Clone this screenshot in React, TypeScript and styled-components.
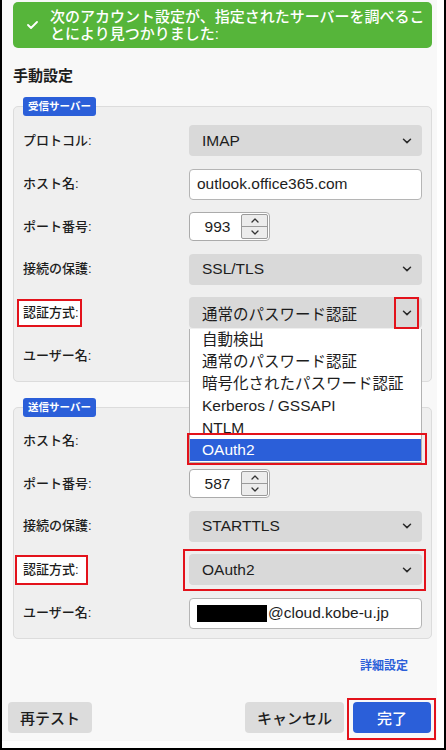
import React from "react";
import styled, { createGlobalStyle, css } from "styled-components";

const GlobalStyle = createGlobalStyle`
  html, body { margin: 0; padding: 0; background: #fff; }
  body {
    font-family: "Liberation Sans", "Noto Sans CJK JP", sans-serif;
    color: #1d1d1d;
  }
  * { box-sizing: border-box; }
`;

const RED = "#e3121b";
const BLUE = "#2b5fd9";

type Mark = { t: number; r: number; b: number; l: number; fill?: boolean };

const markBox = (m?: Mark) =>
  m &&
  css`
    position: relative;
    isolation: isolate;
    &::after {
      content: "";
      position: absolute;
      top: ${-m.t}px;
      right: ${-m.r}px;
      bottom: ${-m.b}px;
      left: ${-m.l}px;
      border: 2px solid ${RED};
      pointer-events: none;
      ${m.fill ? css`background: #fff; z-index: -1;` : css`z-index: 2;`}
    }
  `;

const Frame = styled.div`
  width: 446px;
  height: 750px;
  border: 2px solid #000;
  border-top: none;
  background: #fff;
  overflow: hidden;
  padding: 0 7px 7px 0;
`;

const Dialog = styled.div`
  height: 100%;
  background: #f8f8f8;
  display: flex;
  flex-direction: column;
`;

const Body = styled.div`
  padding: 2px 5px 0 11px;
  display: flex;
  flex-direction: column;
`;

const Banner = styled.div`
  height: 46px;
  background: #56b53a;
  border-radius: 5px;
  display: flex;
  align-items: center;
  padding: 0 6px 0 14px;
  gap: 12px;
  color: #fff;
`;

const BannerText = styled.div`
  font-size: 15px;
  line-height: 17px;
  font-weight: 500;
  white-space: nowrap;
`;

const Heading = styled.h2`
  margin: 18px 0 0;
  font-size: 15px;
  line-height: 20px;
  font-weight: 700;
`;

const Group = styled.fieldset<{ $gap: number }>`
  margin: ${(p) => p.$gap}px 0 0;
  padding: 9px;
  border: 1px solid #dcdcdc;
  border-radius: 5px;
  background: #efefef;
  min-width: 0;
`;

const Badge = styled.legend`
  background: ${BLUE};
  color: #fff;
  font-size: 10.5px;
  font-weight: 700;
  height: 19px;
  line-height: 19px;
  padding: 0 5px;
  border-radius: 3px;
`;

const Rows = styled.div`
  display: grid;
  grid-template-columns: 166px 1fr;
  row-gap: 12.5px;
  align-items: center;
`;

const Label = styled.span<{ $mark?: Mark }>`
  justify-self: start;
  font-size: 13px;
  line-height: 18px;
  font-weight: 500;
  ${(p) => markBox(p.$mark)}
`;

const SelectBox = styled.div<{ $mark?: Mark }>`
  position: relative;
  height: 31px;
  background: #d9d9d9;
  border-radius: 4px;
  display: flex;
  align-items: center;
  padding-left: 13px;
  font-size: 15.5px;
  ${(p) => markBox(p.$mark)}
`;

const Chevron = styled.span<{ $mark?: Mark }>`
  margin-left: auto;
  margin-right: 3px;
  width: 25px;
  height: 31px;
  display: flex;
  align-items: center;
  justify-content: center;
  ${(p) => markBox(p.$mark)}
`;

const TextInput = styled.div`
  height: 31px;
  background: #fff;
  border: 1px solid #b5b5b5;
  border-radius: 4px;
  display: flex;
  align-items: center;
  padding-left: 7px;
  font-size: 15.5px;
  white-space: nowrap;
  overflow: hidden;
`;

const Redacted = styled.span`
  display: inline-block;
  width: 70px;
  height: 17px;
  background: #000;
  margin-right: 1px;
`;

const Spinner = styled.div`
  justify-self: start;
  width: 81px;
  height: 29px;
  background: #fff;
  border: 1px solid #ababab;
  border-radius: 4px;
  display: flex;
  align-items: stretch;
`;

const SpinValue = styled.span`
  flex: 1;
  display: flex;
  align-items: center;
  justify-content: center;
  padding-left: 4px;
  font-size: 15.5px;
`;

const SpinButtons = styled.div`
  width: 27px;
  margin: 1px 1px 1px 0;
  display: flex;
  flex-direction: column;
  border: 1px solid #9a9a9a;
  border-radius: 2px;
  background: #ececec;
`;

const SpinButton = styled.span<{ $down?: boolean }>`
  flex: 1;
  display: flex;
  align-items: center;
  justify-content: center;
  ${(p) => p.$down && css`border-top: 1px solid #9a9a9a;`}
`;

const Dropdown = styled.div`
  position: absolute;
  top: calc(100% + 1px);
  left: 0;
  right: 0;
  z-index: 10;
  background: #fff;
  border: 1px solid #b3b3b3;
  border-top: none;
  padding-bottom: 1px;
`;

const Option = styled.div<{ $active?: boolean; $mark?: Mark }>`
  height: 22px;
  line-height: 22px;
  padding-left: 12px;
  font-size: 15.5px;
  white-space: nowrap;
  ${(p) =>
    p.$active &&
    css`
      background: ${BLUE};
      color: #fff;
    `}
  ${(p) => markBox(p.$mark)}
`;

const Link = styled.a`
  align-self: flex-end;
  margin: 19px 24px 0 0;
  color: ${BLUE};
  font-size: 12px;
  font-weight: 700;
  line-height: 16px;
  text-decoration: none;
`;

const Footer = styled.div`
  margin-top: 28px;
  padding: 0 6px;
  display: flex;
  justify-content: space-between;
`;

const ButtonGroup = styled.div`
  display: flex;
  gap: 9px;
`;

const Button = styled.button<{ $primary?: boolean; $mark?: Mark }>`
  height: 31px;
  padding: 0 12px;
  border: none;
  border-radius: 4px;
  font-family: inherit;
  font-size: 15px;
  font-weight: 500;
  background: #dcdcdc;
  color: #1d1d1d;
  ${(p) =>
    p.$primary &&
    css`
      background: ${BLUE};
      color: #fff;
      min-width: 78px;
    `}
  ${(p) => markBox(p.$mark)}
`;

const ChevronIcon = () => (
  <svg width="10" height="6" viewBox="0 0 10 6" fill="none">
    <path d="M1.5 1.2 L5 4.6 L8.5 1.2" stroke="#2a2a2a" strokeWidth="1.5" strokeLinecap="round" strokeLinejoin="round" />
  </svg>
);

const SmallArrow = ({ down }: { down?: boolean }) => (
  <svg width="8" height="5" viewBox="0 0 8 5" fill="none">
    <path
      d={down ? "M1 1 L4 4 L7 1" : "M1 4 L4 1 L7 4"}
      stroke="#333"
      strokeWidth="1.3"
      strokeLinecap="round"
      strokeLinejoin="round"
    />
  </svg>
);

const CheckIcon = () => (
  <svg width="11" height="8" viewBox="0 0 11 8" fill="none">
    <path d="M1 4 L4 7 L10 1" stroke="#fff" strokeWidth="1.8" strokeLinecap="round" strokeLinejoin="round" />
  </svg>
);

const Select = ({
  value,
  mark,
  chevronMark,
  children,
}: {
  value: string;
  mark?: Mark;
  chevronMark?: Mark;
  children?: React.ReactNode;
}) => (
  <SelectBox $mark={mark}>
    {value}
    <Chevron $mark={chevronMark}>
      <ChevronIcon />
    </Chevron>
    {children}
  </SelectBox>
);

const Port = ({ value }: { value: string }) => (
  <Spinner>
    <SpinValue>{value}</SpinValue>
    <SpinButtons>
      <SpinButton>
        <SmallArrow />
      </SpinButton>
      <SpinButton $down>
        <SmallArrow down />
      </SpinButton>
    </SpinButtons>
  </Spinner>
);

const authOptions = [
  "自動検出",
  "通常のパスワード認証",
  "暗号化されたパスワード認証",
  "Kerberos / GSSAPI",
  "NTLM",
  "OAuth2",
];

export default function App() {
  return (
    <>
      <GlobalStyle />
      <Frame>
        <Dialog>
          <Body>
            <Banner>
              <CheckIcon />
              <BannerText>
                次のアカウント設定が、指定されたサーバーを調べるこ
                <br />
                とにより見つかりました:
              </BannerText>
            </Banner>
            <Heading>手動設定</Heading>

            <Group $gap={11}>
              <Badge>受信サーバー</Badge>
              <Rows>
                <Label>プロトコル:</Label>
                <Select value="IMAP" />
                <Label>ホスト名:</Label>
                <TextInput>outlook.office365.com</TextInput>
                <Label>ポート番号:</Label>
                <Port value="993" />
                <Label>接続の保護:</Label>
                <Select value="SSL/TLS" />
                <Label $mark={{ t: 5, r: 3, b: 5, l: 6, fill: true }}>認証方式:</Label>
                <Select value="通常のパスワード認証" chevronMark={{ t: 0, r: 0, b: 1, l: 0 }}>
                  <Dropdown>
                    {authOptions.map((o) => (
                      <Option
                        key={o}
                        $active={o === "OAuth2"}
                        $mark={o === "OAuth2" ? { t: 6, r: 6, b: 4, l: 3 } : undefined}
                      >
                        {o}
                      </Option>
                    ))}
                  </Dropdown>
                </Select>
                <Label>ユーザー名:</Label>
                <TextInput />
              </Rows>
            </Group>

            <Group $gap={16}>
              <Badge>送信サーバー</Badge>
              <Rows>
                <Label>ホスト名:</Label>
                <TextInput />
                <Label>ポート番号:</Label>
                <Port value="587" />
                <Label>接続の保護:</Label>
                <Select value="STARTTLS" />
                <Label $mark={{ t: 6, r: 9, b: 6, l: 8, fill: true }}>認証方式:</Label>
                <Select value="OAuth2" mark={{ t: 5, r: 4, b: 6, l: 6 }} />
                <Label>ユーザー名:</Label>
                <TextInput>
                  <Redacted />
                  @cloud.kobe-u.jp
                </TextInput>
              </Rows>
            </Group>

            <Link href="#">詳細設定</Link>
          </Body>
          <Footer>
            <Button>再テスト</Button>
            <ButtonGroup>
              <Button>キャンセル</Button>
              <Button $primary $mark={{ t: 4, r: 5, b: 7, l: 6 }}>
                完了
              </Button>
            </ButtonGroup>
          </Footer>
        </Dialog>
      </Frame>
    </>
  );
}
